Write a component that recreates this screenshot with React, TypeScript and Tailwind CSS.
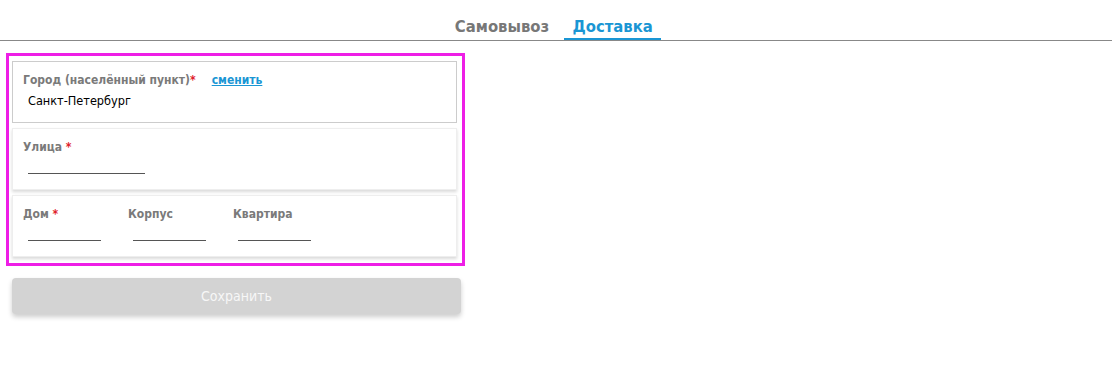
import React from "react";

const font = { fontFamily: '"DejaVu Sans Condensed", "DejaVu Sans", Verdana, sans-serif', fontStretch: "condensed" as const };

function Field({ label, required, width }: { label: string; required?: boolean; width: string }) {
  return (
    <div className="flex flex-col">
      <div className="text-[12px] font-bold text-[#7a7a7a] leading-[16px] h-[16px]">
        {label}
        {required && <span className="text-[#e0202a]"> *</span>}
      </div>
      <div className={`ml-[5px] mt-[18px] h-px bg-[#555] ${width}`} />
    </div>
  );
}

export default function App() {
  return (
    <div className="w-[1112px] bg-white min-h-[366px]" style={font}>
      <div className="flex justify-center border-b border-[#888] h-[41px] items-end">
        <div className="flex items-end ml-[4px]">
          <div className="pr-[8px] pb-[3px] text-[16.5px] font-bold text-[#777] leading-[20px]">Самовывоз</div>
          <div className="ml-[7px] pb-[1px] text-[16.5px] font-bold text-[#1a96d4] leading-[20px] border-b-2 border-[#1a96d4] w-[97px] text-center">
            Доставка
          </div>
        </div>
      </div>
      <div className="ml-[6px] mt-[12px] w-[459px] border-[3px] border-[#ee1ee6] px-[3px] pt-[5px] pb-[6px] flex flex-col gap-[5px]">
        <div className="w-[445px] h-[62px] border border-[#cccccc] bg-white px-[10px] pt-[10px]">
          <div className="text-[12px] font-bold text-[#7a7a7a] leading-[16px]">
            Город (населённый пункт)<span className="text-[#e0202a]">*</span>
            <a className="ml-[16px] text-[#1a96d4] underline">сменить</a>
          </div>
          <div className="ml-[5px] mt-[5px] text-[12.6px] text-black leading-[15px]">Санкт-Петербург</div>
        </div>
        <div className="w-[445px] h-[62px] border border-[#eeeeee] bg-white shadow-[0_2px_3px_rgba(0,0,0,0.15)] px-[10px] pt-[10px]">
          <Field label="Улица" required width="w-[117px]" />
        </div>
        <div className="w-[445px] h-[62px] border border-[#eeeeee] bg-white shadow-[0_2px_3px_rgba(0,0,0,0.15)] px-[10px] pt-[10px] flex gap-[32px]">
          <div className="w-[73px]"><Field label="Дом" required width="w-[73px]" /></div>
          <div className="w-[73px]"><Field label="Корпус" width="w-[73px]" /></div>
          <div className="w-[73px]"><Field label="Квартира" width="w-[73px]" /></div>
        </div>
      </div>
      <button className="ml-[12px] mt-[12px] w-[449px] h-[36px] rounded-[4px] bg-[#d3d3d3] text-[#f7f7f7] text-[14px] shadow-[0_3px_5px_rgba(0,0,0,0.2)]">
        Сохранить
      </button>
    </div>
  );
}
